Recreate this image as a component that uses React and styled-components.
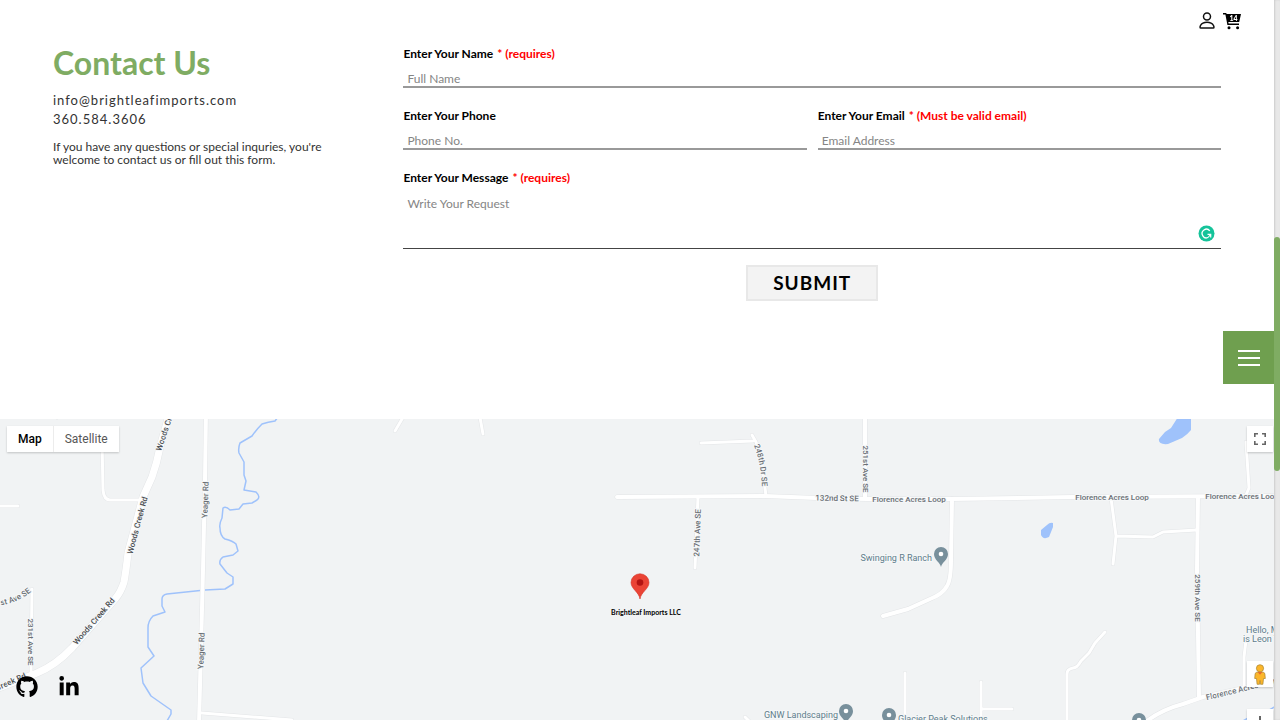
import React from "react";
import styled, { createGlobalStyle, css } from "styled-components";
import { FaGithub, FaLinkedinIn } from "react-icons/fa";

const GlobalStyle = createGlobalStyle`
  *, *::before, *::after { box-sizing: border-box; }
  body {
    margin: 0;
    background: #fff;
    color: #000;
    font-family: Lato, "Liberation Sans", sans-serif;
    scrollbar-width: none;
  }
  button, input, textarea { font: inherit; color: inherit; }
`;

const Page = styled.div`
  display: flex;
  flex-direction: column;
  min-height: 100vh;
`;

const ContactSection = styled.section`
  display: grid;
  grid-template-columns: 3fr 7fr;
  align-items: start;
  min-height: 419px;
  padding: 46px 59px 40px 53px;
`;

const Intro = styled.div`
  max-width: 290px;
`;

const Title = styled.h1`
  margin: 0 0 12px;
  color: #7fac63;
  font-size: 32px;
  line-height: 34px;
  font-weight: 700;
`;

const ContactLink = styled.a`
  display: block;
  width: max-content;
  margin-bottom: 3px;
  color: #333;
  font-size: 13px;
  line-height: 16px;
  letter-spacing: 1px;
  text-decoration: none;
`;

const Blurb = styled.p`
  margin: 13px 0 0;
  color: #333;
  font-size: 12px;
  line-height: 13px;
`;

const Form = styled.form`
  display: grid;
  grid-template-columns: 1fr 1fr;
  gap: 20px 11px;
`;

const Field = styled.div`
  position: relative;
  display: flex;
  flex-direction: column;
  grid-column: ${(p) => (p.$wide ? "1 / -1" : "auto")};
`;

const Label = styled.label`
  font-size: 12px;
  line-height: 16px;
  font-weight: 700;
`;

const Required = styled.span`
  margin-left: 4px;
  color: #f00;
`;

const control = css`
  width: 100%;
  border: 0;
  border-radius: 0;
  background: transparent;
  font-size: 12px;
  outline: none;
  &::placeholder { color: #858585; opacity: 1; }
`;

const Input = styled.input`
  ${control}
  height: 26px;
  padding: 8px 4px 0;
  border-bottom: 2px solid #999;
`;

const TextArea = styled.textarea`
  ${control}
  height: 63px;
  padding: 10px 4px 0;
  border-bottom: 1px solid #444;
  line-height: 16px;
  resize: none;
`;

const AssistBadge = styled.svg`
  position: absolute;
  right: 6px;
  bottom: 7px;
`;

const Submit = styled.button`
  grid-column: 1 / -1;
  justify-self: center;
  width: 132px;
  height: 36px;
  margin-top: -4px;
  padding: 0;
  border: 2px solid #e8e8e8;
  background: #f3f3f3;
  font-size: 19px;
  line-height: 32px;
  font-weight: 700;
  letter-spacing: 1px;
`;

const AccountBar = styled.nav`
  position: fixed;
  top: 12px;
  right: 39px;
  display: flex;
  gap: 8px;
`;

const IconButton = styled.button`
  display: flex;
  padding: 0;
  border: 0;
  background: none;
`;

const MenuButton = styled.button`
  position: fixed;
  top: 331px;
  right: 6px;
  z-index: 3;
  display: flex;
  flex-direction: column;
  align-items: center;
  justify-content: center;
  gap: 5px;
  width: 51px;
  height: 53px;
  padding: 0;
  border: 0;
  background: #6f9f4f;
`;

const MenuBar = styled.span`
  width: 22px;
  height: 2px;
  background: #fff;
`;

const ScrollTrack = styled.div`
  position: fixed;
  top: 0;
  right: 0;
  bottom: 0;
  z-index: 4;
  width: 6px;
  background: #e8e8e8;
  box-shadow: inset 1px 0 2px #ccc;
`;

const ScrollThumb = styled.div`
  height: 234px;
  margin-top: 237px;
  border-radius: 3px;
  background: #7fac63;
`;

const MapSection = styled.section`
  position: relative;
  flex: 1 0 301px;
  overflow: hidden;
  background: #f1f3f4;
  font-family: Roboto, "Liberation Sans", sans-serif;
`;

const MapCanvas = styled.svg`
  position: absolute;
  inset: 0;
  width: 100%;
  height: 100%;
`;

const MapTypes = styled.div`
  position: absolute;
  top: 7px;
  left: 7px;
  display: flex;
  background: #fff;
  box-shadow: 0 1px 2px rgba(0, 0, 0, 0.2);
`;

const MapType = styled.button`
  height: 26px;
  padding: 0 11px;
  border: 0;
  background: #fff;
  font-size: 12px;
  font-weight: ${(p) => (p.$active ? 500 : 400)};
  color: ${(p) => (p.$active ? "#000" : "#565656")};
  & + & { border-left: 1px solid #ececec; }
`;

const MapTools = styled.div`
  position: absolute;
  top: 7px;
  right: 7px;
  bottom: -15px;
  display: flex;
  flex-direction: column;
  gap: 22px;
`;

const ToolButton = styled.button`
  display: flex;
  align-items: center;
  justify-content: center;
  width: 26px;
  height: 26px;
  padding: 0;
  border: 0;
  background: #fff;
  box-shadow: 0 1px 2px rgba(0, 0, 0, 0.2);
  &:first-child { margin-bottom: auto; }
`;

const Socials = styled.nav`
  position: fixed;
  left: 16px;
  bottom: 22px;
  display: flex;
  gap: 20px;
`;

const SocialLink = styled.a`
  display: flex;
  color: #000;
`;

const RoadLabel = styled.text`
  fill: ${(p) => (p.$major ? "#4a4d50" : "#6a6f75")};
  font-size: 8px;
  font-weight: 500;
  text-anchor: middle;
  stroke: #f5f7f8;
  stroke-width: 2px;
  paint-order: stroke;
`;

const PlaceLabel = styled.text`
  fill: #607d8b;
  font-size: 9px;
  stroke: #f5f7f8;
  stroke-width: 2px;
  paint-order: stroke;
`;

const MarkerLabel = styled.text`
  fill: #000;
  font-family: Lato, sans-serif;
  font-size: 7px;
  font-weight: 700;
  text-anchor: middle;
`;

const ROADS = [
  { w: 7, d: "M170 412L160 447Q157 463 152 477L143 497L128 553Q126 571 124 582Q121 592 115 599L72 648Q56 665 37 673L-4 689" },
  { w: 4, d: "M206 410L205 480L203 570L199 724" },
  { w: 3, d: "M102 440L103 490Q104 500 110 500L140 500" },
  { w: 3, d: "M-4 506H18" },
  { w: 3, d: "M-4 603Q20 602 32 589L31 672" },
  { w: 3, d: "M202 713L292 720" },
  { w: 2, d: "M57 414V418" },
  { w: 4, d: "M617 497L765 496L817 498L867 499L952 499L1073 497L1284 496" },
  { w: 3, d: "M701 443L753 441M752 435L756 442Q763 462 764 480L766 496" },
  { w: 4, d: "M865 412V498" },
  { w: 3, d: "M698 497L695 568" },
  { w: 3, d: "M405 414L395 431M479 412L483 434" },
  { w: 4, d: "M952 499L951 560Q951 580 947 586Q943 594 930 599L908 609L883 616" },
  { w: 3, d: "M1111 498L1116 536L1113 564M1116 536L1153 537L1163 532L1197 530" },
  { w: 4, d: "M1198 497L1197 570L1199 697" },
  { w: 3, d: "M1246 442L1249 488L1246 495" },
  { w: 4, d: "M1143 724Q1160 710 1183 704L1203 697L1257 685L1280 679" },
  { w: 3, d: "M1105 632L1095 643L1089 653L1081 661Q1077 668 1073 668Q1067 669 1067 674V724" },
  { w: 3, d: "M981 682V724M981 709H1012M905 673V724" },
  { w: 3, d: "M745 717L752 724M1246 640L1244 657V690" },
];

const RIVER =
  "M278 417L275 421Q268 422 262 424Q256 430 252 436L240 443Q238 448 239 453L244 462V475L246 481L244 490L256 492Q261 497 257 500L252 503L243 504L239 509L230 510Q226 506 223 508L222 518Q219 524 220 528Q220 536 225 539Q233 541 236 544L238 551L233 555L223 557Q219 560 220 564L227 573L233 577V584L225 589L205 590L167 594Q162 595 162 599V606L165 612L153 616Q148 621 148 628V647L154 656L141 668L143 683L151 696L171 710V714L167 721M1241 722L1250 717M1266 712L1276 706";

const ROAD_LABELS = [
  { text: "132nd St SE", x: 837, y: 501, r: 1 },
  { text: "Florence Acres Loop", x: 909, y: 502 },
  { text: "Florence Acres Loop", x: 1112, y: 500 },
  { text: "Florence Acres Loop", x: 1242, y: 499 },
  { text: "251st Ave SE", x: 863, y: 469, r: 90 },
  { text: "247th Ave SE", x: 700, y: 533, r: -88 },
  { text: "259th Ave SE", x: 1195, y: 598, r: 90 },
  { text: "231st Ave SE", x: 28, y: 642, r: 90 },
  { text: "Yeager Rd", x: 208, y: 500, r: -88 },
  { text: "Yeager Rd", x: 204, y: 651, r: -88 },
  { text: "Woods Creek Rd", x: 140, y: 526, r: -75, major: true },
  { text: "Woods Creek Rd", x: 96, y: 623, r: -49, major: true },
];

const CURVED_LABELS = [
  { id: "upper-creek", text: "Woods Creek Rd", d: "M160 454L181 393", major: true },
  { id: "lower-creek", text: "Woods Creek Rd", d: "M-36 702L-1 690L26 678L34 674", major: true },
  { id: "dr-248", text: "248th Dr SE", d: "M754 445Q761 463 762 487" },
  { id: "ave-west", text: "231st Ave SE", d: "M-15 606L2 605Q20 602 33 590" },
  { id: "lower-loop", text: "Florence Acres Loop", d: "M1204 701L1281 682" },
];

const PLACES = [
  { text: "Swinging R Ranch", x: 932, y: 561, anchor: "end" },
  { text: "GNW Landscaping", x: 838, y: 718, anchor: "end" },
  { text: "Glacier Peak Solutions", x: 898, y: 722 },
  { text: "Hello, My Name", x: 1246, y: 633 },
  { text: "is Leon Tours", x: 1243, y: 642 },
];

const PINS = [[941, 555], [846, 712], [889, 716], [1139, 721]];

function Road({ d, color, width }) {
  return <path d={d} fill="none" stroke={color} strokeWidth={width} strokeLinecap="round" strokeLinejoin="round" />;
}

function PlacePin({ x, y }) {
  return (
    <g transform={`translate(${x} ${y})`}>
      <path d="M0 12C-1 7-7 5-7-1A7 7 0 0 1 7-1C7 5 1 7 0 12Z" fill="#78909c" />
      <circle r="2.3" cy="-1" fill="#fff" />
    </g>
  );
}

function StreetMap() {
  return (
    <MapCanvas viewBox="0 419 1280 301" preserveAspectRatio="xMidYMin slice" role="img" aria-label="Map of Brightleaf Imports LLC">
      <path d="M1178 417H1191V430Q1188 434 1182 438L1168 444Q1158 445 1159 439L1165 432L1171 428Z" fill="#9fc2fb" />
      <path d="M1053 523V527L1049 537Q1043 540 1041 535V530L1047 525Q1050 522 1053 523Z" fill="#9fc2fb" />
      <path d={RIVER} fill="none" stroke="#9fc2fb" strokeWidth="1.5" strokeLinejoin="round" />
      {ROADS.map((r) => <Road key={r.d} d={r.d} color="#e3e5e7" width={r.w + 1} />)}
      {ROADS.map((r) => <Road key={r.d} d={r.d} color="#fff" width={r.w} />)}
      {ROAD_LABELS.map((l) => (
        <RoadLabel key={l.text + l.x} $major={l.major} transform={`translate(${l.x} ${l.y}) rotate(${l.r || 0})`}>{l.text}</RoadLabel>
      ))}
      {CURVED_LABELS.map((l) => (
        <g key={l.id}>
          <path id={l.id} d={l.d} fill="none" />
          <RoadLabel $major={l.major}>
            <textPath href={`#${l.id}`} startOffset="50%">{l.text}</textPath>
          </RoadLabel>
        </g>
      ))}
      {PLACES.map((p) => <PlaceLabel key={p.text} x={p.x} y={p.y} textAnchor={p.anchor}>{p.text}</PlaceLabel>)}
      {PINS.map(([x, y]) => <PlacePin key={x} x={x} y={y} />)}
      <path d="M640 599C639 592 631 589 631 582.500A9 8.700 0 0 1 649 582.500C649 589 641 592 640 599Z" fill="#ea4335" stroke="#d33426" strokeWidth=".6" />
      <circle cx="640" cy="582.500" r="3.300" fill="#b31412" />
      <MarkerLabel x="646" y="615">Brightleaf Imports LLC</MarkerLabel>
    </MapCanvas>
  );
}

function TextField({ id, label, note, type = "text", placeholder, wide }) {
  return (
    <Field $wide={wide}>
      <Label htmlFor={id}>{label}{note && <Required>{note}</Required>}</Label>
      <Input id={id} type={type} placeholder={placeholder} />
    </Field>
  );
}

export default function App() {
  return (
    <Page>
      <GlobalStyle />
      <AccountBar aria-label="Account">
        <IconButton aria-label="Profile">
          <svg width="16" height="18" viewBox="0 0 16 18" fill="none" stroke="#111" strokeWidth="1.5">
            <circle cx="8" cy="4.500" r="3.500" />
            <path d="M1.800 16C.7 16 1 14.500 1.500 13.500C2.700 11.300 5 10.300 8 10.300S13.300 11.300 14.500 13.500C15 14.500 15.300 16 14.200 16Z" />
          </svg>
        </IconButton>
        <IconButton aria-label="Cart, 14 items">
          <svg width="18" height="18" viewBox="0 0 18 18">
            <path d="M0 1H2.800Q3.500 1 3.700 2H18L16.200 10H5.300L5.600 11.500H16V13H4.400L2.400 2.500H0Z" />
            <circle cx="6" cy="15.700" r="1.500" />
            <circle cx="14.600" cy="15.700" r="1.500" />
            <text x="10.500" y="8.500" fill="#fff" fontFamily="Lato, sans-serif" fontSize="7" fontWeight="900" textAnchor="middle">14</text>
          </svg>
        </IconButton>
      </AccountBar>

      <ContactSection>
        <Intro>
          <Title>Contact Us</Title>
          <ContactLink href="mailto:info@brightleafimports.com">info@brightleafimports.com</ContactLink>
          <ContactLink href="tel:3605843606">360.584.3606</ContactLink>
          <Blurb>If you have any questions or special inquries, you're welcome to contact us or fill out this form.</Blurb>
        </Intro>
        <Form onSubmit={(e) => e.preventDefault()}>
          <TextField wide id="name" label="Enter Your Name" note="* (requires)" placeholder="Full Name" />
          <TextField id="phone" type="tel" label="Enter Your Phone" placeholder="Phone No." />
          <TextField id="email" type="email" label="Enter Your Email" note="*  (Must be valid email)" placeholder="Email Address" />
          <Field $wide>
            <Label htmlFor="message">Enter Your Message<Required>* (requires)</Required></Label>
            <TextArea id="message" placeholder="Write Your Request" />
            <AssistBadge width="17" height="17" viewBox="0 0 17 17" fill="none" aria-hidden="true">
              <circle cx="8.500" cy="8.500" r="8" fill="#15c39a" />
              <path d="M11.800 5.800A4.300 4.300 0 1 0 10.500 12.300" stroke="#fff" strokeWidth="1.300" />
              <path d="M9.500 9.300H12.700V12.500M12.500 9.500L10.500 12" stroke="#fff" strokeWidth="1.200" />
            </AssistBadge>
          </Field>
          <Submit type="submit">SUBMIT</Submit>
        </Form>
      </ContactSection>

      <MapSection>
        <StreetMap />
        <MapTypes>
          <MapType $active>Map</MapType>
          <MapType>Satellite</MapType>
        </MapTypes>
        <MapTools>
          <ToolButton aria-label="Fullscreen">
            <svg width="12" height="12" viewBox="0 0 12 12" fill="none" stroke="#666" strokeWidth="1.600">
              <path d="M.8 4V.8H4M8 .8H11.200V4M11.200 8V11.200H8M4 11.200H.8V8" />
            </svg>
          </ToolButton>
          <ToolButton aria-label="Street View">
            <svg width="12" height="21" viewBox="1 0 12 21" stroke="#a8842f" strokeWidth=".7">
              <path d="M3.800 8.200H10.200Q11.600 8.500 11.900 10L12.300 14.500H10.500L9.900 20.300H7.500L7 16.500L6.500 20.300H4.100L3.500 14.500H1.700L2.100 10Q2.400 8.500 3.800 8.200Z" fill="#fbb62b" />
              <circle cx="7" cy="4.300" r="3.600" fill="#fbb62b" />
              <path d="M4.500 8.100H9.500L7 10.800Z" fill="#e66b2e" stroke="none" />
            </svg>
          </ToolButton>
          <ToolButton aria-label="Zoom in">
            <svg width="12" height="12" viewBox="0 0 12 12" stroke="#666" strokeWidth="2"><path d="M6 0V12M0 6H12" /></svg>
          </ToolButton>
        </MapTools>
      </MapSection>

      <Socials aria-label="Social links">
        <SocialLink href="https://github.com" aria-label="GitHub"><FaGithub size={22} /></SocialLink>
        <SocialLink href="https://www.linkedin.com" aria-label="LinkedIn"><FaLinkedinIn size={22} /></SocialLink>
      </Socials>
      <MenuButton aria-label="Open menu"><MenuBar /><MenuBar /><MenuBar /></MenuButton>
      <ScrollTrack aria-hidden="true"><ScrollThumb /></ScrollTrack>
    </Page>
  );
}
